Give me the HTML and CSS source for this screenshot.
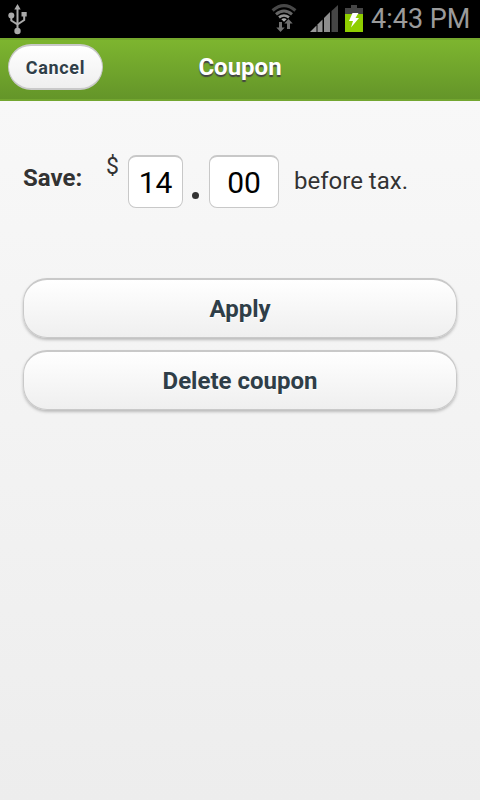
FILE: index.html
```html
<!DOCTYPE html>
<html lang="en">
<head>
<meta charset="utf-8">
<title>Coupon</title>
<link rel="stylesheet" href="styles.css">
</head>
<body>
<div class="status">
  <svg class="usb" width="20" height="32" viewBox="0 0 20 32" fill="none" stroke="#aaa" stroke-width="2">
    <path d="M9.500 5v22M3.300 12v5.500l6.200 4M16.200 10v7l-6.700 4.500"/>
    <g fill="#aaa" stroke="none"><path d="M9.500 1l3.200 5.500h-6.400z"/><circle cx="3.300" cy="12.500" r="3"/><path d="M13.500 9h5.200v4.500h-5.200z"/><circle cx="9.500" cy="28" r="3.200"/></g>
  </svg>
  <svg class="wifi" width="28" height="30" viewBox="0 0 28 30" fill="none">
    <path d="M2.600 7.500Q14-2.200 25.400 7.500" stroke="#484848" stroke-width="3.200"/>
    <path d="M6 11.300Q14 4.600 22 11.300" stroke="#666" stroke-width="3"/>
    <path d="M9 14.400Q14 10.600 19 14.400" stroke="#939393" stroke-width="2.600"/>
    <path d="M11.300 16.300Q14 14.300 16.700 16.300L14 18.800z" fill="#aaa"/>
    <path d="M9 19h3v5.500h2.700L10.500 29 6.300 24.500H9zM17 26v-5.500h-2.700L18.500 16l4.200 4.500H20V26z" fill="#707070"/>
  </svg>
  <svg class="signal" width="28" height="27" viewBox="0 0 28 27">
    <path d="M0 27l6.500-6.500V27z" fill="#999"/><path d="M7.500 27v-7.500l5-5V27z" fill="#939393"/>
    <path d="M14 27V13l6-6v20z" fill="#8d8d8d"/><path d="M21.500 27V6L28 0v27z" fill="#454545"/>
  </svg>
  <svg class="battery" width="18" height="27" viewBox="0 0 18 27">
    <path d="M6 0h6v3h6v6H0V3h6z" fill="#454545"/><path d="M0 9h18v18H0z" fill="#8fce00"/>
    <path d="M7.500 8h6L10.500 13h3.500L6 22.500l2-6.500H4z" fill="#fff"/>
  </svg>
  <span class="time">4:43 PM</span>
</div>
<header class="bar">
  <button class="pill cancel">Cancel</button>
  <h1 class="title">Coupon</h1>
</header>
<main class="content">
  <div class="row">
    <span class="save">Save:</span>
    <span class="dollar">$</span>
    <span class="field whole">14</span>
    <span class="dot"></span>
    <span class="field cents">00</span>
    <span class="tax">before tax.</span>
  </div>
  <button class="pill action">Apply</button>
  <button class="pill action">Delete coupon</button>
</main>
</body>
</html>
```
FILE: styles.css
```css
* { box-sizing: border-box; }
body {
  margin: 0;
  height: 800px;
  display: flex;
  flex-direction: column;
  overflow: hidden;
  font-family: Roboto, sans-serif;
  color: #333;
}
.status {
  height: 38px;
  flex: none;
  display: flex;
  align-items: flex-start;
  background: #000;
}
.usb { margin: 3px 0 0 8px; }
.wifi { margin: 3px 0 0 242px; }
.signal { margin: 5px 0 0 12px; }
.battery { margin: 5px 0 0 7px; }
.time {
  margin-left: 8px;
  color: #9b9b9b;
  font-size: 27px;
  line-height: 38px;
  white-space: nowrap;
}
.bar {
  height: 63px;
  flex: none;
  display: grid;
  grid-template-columns: 96px 1fr 96px;
  padding: 4px 8px 0;
  border-top: 2px solid #75a82d;
  border-bottom: 2px solid #73a630;
  background: linear-gradient(#7db52f, #649529);
}
.title {
  margin: 0;
  text-align: center;
  font-size: 24px;
  line-height: 46px;
  font-weight: 700;
  color: #fff;
  text-shadow: 0 2px 1px #444;
}
.pill {
  display: block;
  border: 1px solid #c9c9c9;
  border-top-width: 2px;
  background: linear-gradient(#fff, #efefef);
  font-family: Roboto, sans-serif;
  font-weight: 700;
  color: #2f3e48;
  padding: 0;
  text-shadow: 0 1px 0 #fff;
}
.cancel {
  width: 95px;
  height: 46px;
  border-width: 2px 1px;
  border-radius: 23px;
  font-size: 18px;
  letter-spacing: 0.65px;
}
.content {
  flex: 1;
  padding: 54px 23px 0;
  background: linear-gradient(#f8f8f8, #ededed);
}
.row {
  display: flex;
  align-items: flex-start;
  height: 123px;
  font-size: 24px;
  line-height: 28px;
  text-shadow: 0 1px 0 #fff;
  white-space: nowrap;
}
.save { width: 83px; padding-top: 9px; font-weight: 700; }
.dollar { width: 22px; margin-top: -2px; font-size: 23px; }
.field {
  height: 53px;
  border: 1px solid #c8c8c8;
  border-top-width: 2px;
  border-radius: 8px;
  background: #fff;
  color: #000;
  font-size: 30px;
  line-height: 51px;
  text-align: center;
}
.whole { width: 55px; }
.dot { width: 7px; height: 7px; border-radius: 50%; background: #333; margin: 37px 10px 0 9px; }
.cents { width: 70px; }
.tax { margin: 12px 0 0 15px; }
.action {
  width: 434px;
  height: 60px;
  margin-bottom: 12px;
  border-radius: 24px;
  font-size: 24px;
  box-shadow: 0 2px 3px #bbb;
}
```
